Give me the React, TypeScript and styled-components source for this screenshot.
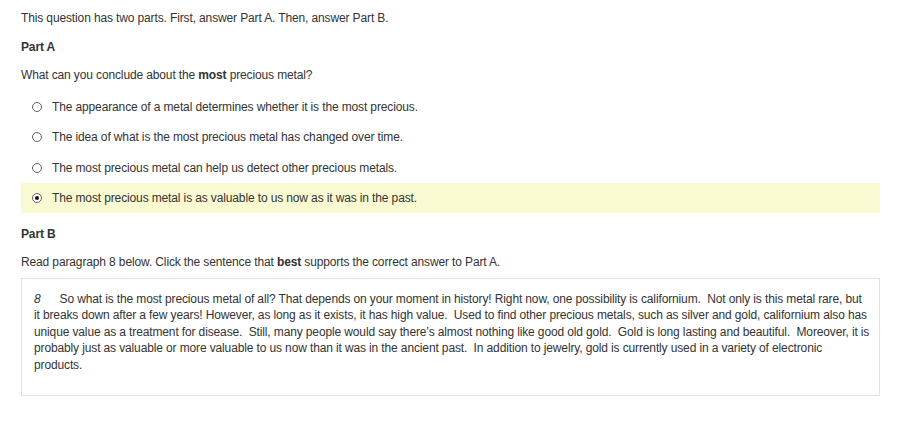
import React from "react";
import styled, { createGlobalStyle } from "styled-components";

const Global = createGlobalStyle`
  html, body { margin: 0; padding: 0; background: #ffffff; }
  body { font-family: Arial, "Liberation Sans", sans-serif; color: #333333; }
`;

const Page = styled.div`
  width: 859px;
  padding: 10px 0 0 21px;
  font-size: 12px;
  line-height: 16px;
  letter-spacing: -0.13px;
`;

const Line = styled.p<{ $top: number }>`
  margin: ${(p) => p.$top}px 0 0 0;
`;

const Heading = styled.h3<{ $top: number }>`
  margin: ${(p) => p.$top}px 0 0 0;
  font-size: 12px;
  line-height: 16px;
  font-weight: bold;
`;

const Options = styled.div`
  margin-top: 9px;
  display: flex;
  flex-direction: column;
  gap: 0.33px;
`;

const Option = styled.label<{ $selected: boolean }>`
  display: flex;
  align-items: center;
  height: 30px;
  padding-left: 11px;
  background: ${(p) => (p.$selected ? "#fafad2" : "transparent")};
  cursor: pointer;
`;

const Radio = styled.span<{ $checked: boolean }>`
  box-sizing: border-box;
  width: 10px;
  height: 10px;
  border-radius: 50%;
  border: 1px solid #606060;
  background: #ffffff;
  margin-right: 10px;
  display: flex;
  align-items: center;
  justify-content: center;
  &::after {
    content: "";
    display: ${(p) => (p.$checked ? "block" : "none")};
    width: 4px;
    height: 4px;
    border-radius: 50%;
    background: #111111;
  }
`;

const Passage = styled.div`
  margin-top: 8px;
  border: 1px solid #e2e2e2;
  padding: 12px 6px 22px 12px;
  line-height: 16.5px;
  white-space: pre;
`;

const PassageLine = styled.span`
  display: block;
`;

const ParaNum = styled.i`
  display: inline-block;
  padding-right: 19px;
`;

const options = [
  "The appearance of a metal determines whether it is the most precious.",
  "The idea of what is the most precious metal has changed over time.",
  "The most precious metal can help us detect other precious metals.",
  "The most precious metal is as valuable to us now as it was in the past.",
];

const passage = [
  "So what is the most precious metal of all? That depends on your moment in history! Right now, one possibility is californium.  Not only is this metal rare, but",
  "it breaks down after a few years! However, as long as it exists, it has high value.  Used to find other precious metals, such as silver and gold, californium also has",
  "unique value as a treatment for disease.  Still, many people would say there’s almost nothing like good old gold.  Gold is long lasting and beautiful.  Moreover, it is",
  "probably just as valuable or more valuable to us now than it was in the ancient past.  In addition to jewelry, gold is currently used in a variety of electronic",
  "products.",
];

export default function App() {
  const selected = 3;
  return (
    <>
      <Global />
      <Page>
        <Line $top={0}>This question has two parts. First, answer Part A. Then, answer Part B.</Line>
        <Heading $top={13}>Part A</Heading>
        <Line $top={12}>
          What can you conclude about the <b>most</b> precious metal?
        </Line>
        <Options>
          {options.map((o, i) => (
            <Option key={i} $selected={i === selected}>
              <Radio $checked={i === selected} />
              {o}
            </Option>
          ))}
        </Options>
        <Heading $top={13}>Part B</Heading>
        <Line $top={12}>
          Read paragraph 8 below. Click the sentence that <b>best</b> supports the correct answer to Part A.
        </Line>
        <Passage>
          {passage.map((l, i) => (
            <PassageLine key={i}>
              {i === 0 && <ParaNum>8</ParaNum>}
              {l}
            </PassageLine>
          ))}
        </Passage>
      </Page>
    </>
  );
}
